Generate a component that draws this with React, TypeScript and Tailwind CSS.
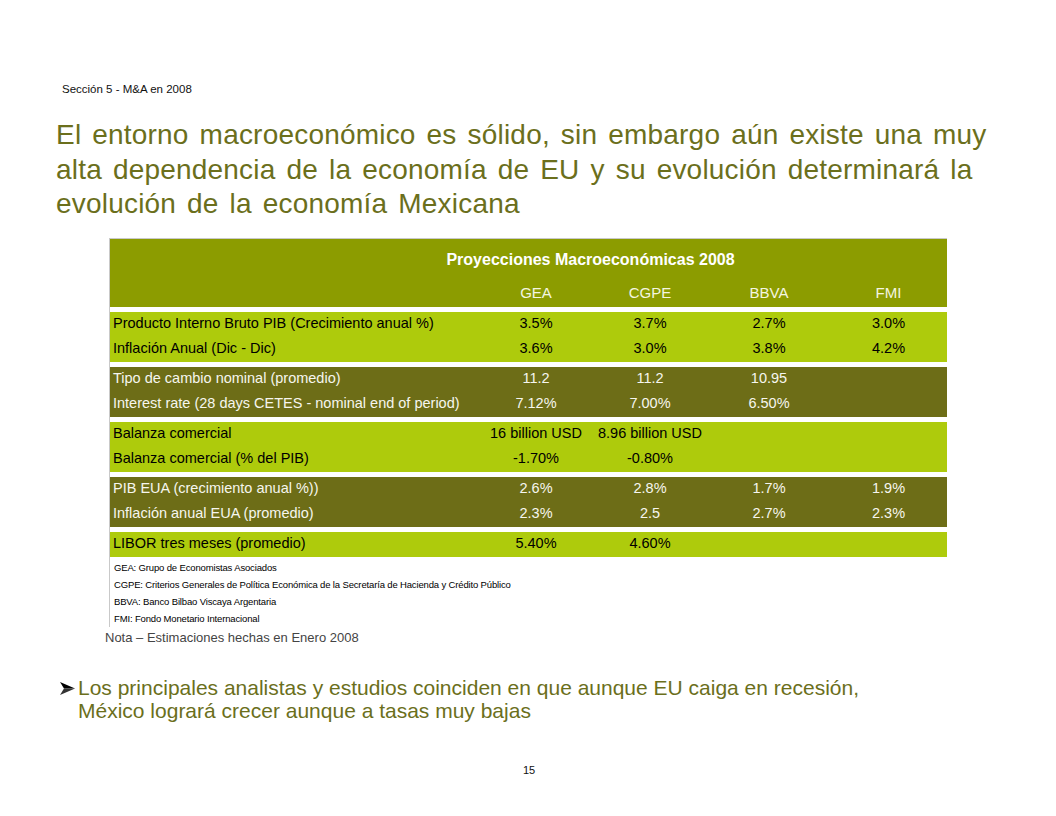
const bands = [
  {
    tone: "light",
    rows: [
      ["Producto Interno Bruto PIB (Crecimiento anual %)", "3.5%", "3.7%", "2.7%", "3.0%"],
      ["Inflación Anual (Dic - Dic)", "3.6%", "3.0%", "3.8%", "4.2%"],
    ],
  },
  {
    tone: "dark",
    rows: [
      ["Tipo de cambio nominal (promedio)", "11.2", "11.2", "10.95", ""],
      ["Interest rate (28 days CETES - nominal end of period)", "7.12%", "7.00%", "6.50%", ""],
    ],
  },
  {
    tone: "light",
    rows: [
      ["Balanza comercial", "16 billion USD", "8.96 billion USD", "", ""],
      ["Balanza comercial (% del PIB)", "-1.70%", "-0.80%", "", ""],
    ],
  },
  {
    tone: "dark",
    rows: [
      ["PIB EUA (crecimiento anual %))", "2.6%", "2.8%", "1.7%", "1.9%"],
      ["Inflación anual EUA (promedio)", "2.3%", "2.5", "2.7%", "2.3%"],
    ],
  },
  {
    tone: "light",
    rows: [["LIBOR tres meses (promedio)", "5.40%", "4.60%", "", ""]],
  },
];

const notes = [
  "GEA: Grupo de Economistas Asociados",
  "CGPE: Criterios Generales de Política Económica de la Secretaría de Hacienda y Crédito Público",
  "BBVA: Banco Bilbao Viscaya Argentaria",
  "FMI: Fondo Monetario Internacional",
];

const cols = "grid grid-cols-[370px_112px_116px_122px_117px]";

function Arrowhead() {
  return (
    <svg width="15" height="13" viewBox="0 0 15 13" className="mt-[6px]">
      <polygon points="0,0 15,6.5 4,6.5" fill="#000" />
      <polygon points="0,13 15,6.5 4,6.5" fill="#333" />
    </svg>
  );
}

export default function App() {
  return (
    <div className="w-[1056px] h-[816px] bg-white font-['Liberation_Sans',Arial,sans-serif] overflow-hidden">
      {/* section label */}
      <p className="pt-[83px] pl-[62px] text-[11.5px] leading-[13px] text-[#111]">Sección 5 - M&amp;A en 2008</p>

      {/* heading */}
      <h1 className="mt-[22px] pl-[56px] text-[28px] leading-[34.5px] text-[#6b6f1c] tracking-[0.2px] [word-spacing:3px]">
        El entorno macroeconómico es sólido, sin embargo aún existe una muy
        <br />
        alta dependencia de la economía de EU y su evolución determinará la
        <br />
        evolución de la economía Mexicana
      </h1>

      {/* table */}
      <div className="mt-[16px] ml-[109px] w-[838px] border-l border-t border-[#c9c9c9]">
        <div className="bg-[#8c9c00] text-white">
          <div className="h-[42px] flex items-center justify-center pl-[124px] text-[16px] font-bold">
            Proyecciones Macroeconómicas 2008
          </div>
          <div className={`${cols} h-[26px] items-center text-[15px] text-[#f4f6e0]`}>
            <span />
            <span className="text-center">GEA</span>
            <span className="text-center">CGPE</span>
            <span className="text-center">BBVA</span>
            <span className="text-center">FMI</span>
          </div>
        </div>

        {bands.map((band, i) => (
          <div
            key={i}
            className={`mt-[5px] ${band.tone === "light" ? "bg-[#aecb0c] text-black" : "bg-[#6d6d17] text-[#f6f6ee]"}`}
          >
            {band.rows.map((row, j) => (
              <div key={j} className={`${cols} h-[25px] items-center text-[14.5px]`}>
                <span className="pl-[3px] whitespace-nowrap">{row[0]}</span>
                {row.slice(1).map((v, k) => (
                  <span key={k} className="text-center whitespace-nowrap">
                    {v}
                  </span>
                ))}
              </div>
            ))}
          </div>
        ))}

        <div className="pt-[2px]">
          {notes.map((n) => (
            <p
              key={n}
              className="h-[17px] leading-[17px] pl-[4px] text-[9.5px] tracking-[-0.15px] text-black whitespace-nowrap"
            >
              {n}
            </p>
          ))}
        </div>
      </div>

      <p className="mt-[4px] ml-[105px] text-[13px] leading-[14px] text-[#444]">Nota – Estimaciones hechas en Enero 2008</p>

      {/* bullet */}
      <div className="mt-[31px] ml-[60px] flex gap-[3px] text-[21px] leading-[23px] text-[#6b6f1c]">
        <Arrowhead />
        <p>
          Los principales analistas y estudios coinciden en que aunque EU caiga en recesión,
          <br />
          México logrará crecer aunque a tasas muy bajas
        </p>
      </div>

      <p className="mt-[42px] text-center pl-[2px] text-[11px] leading-[13px] text-[#111]">15</p>
    </div>
  );
}
